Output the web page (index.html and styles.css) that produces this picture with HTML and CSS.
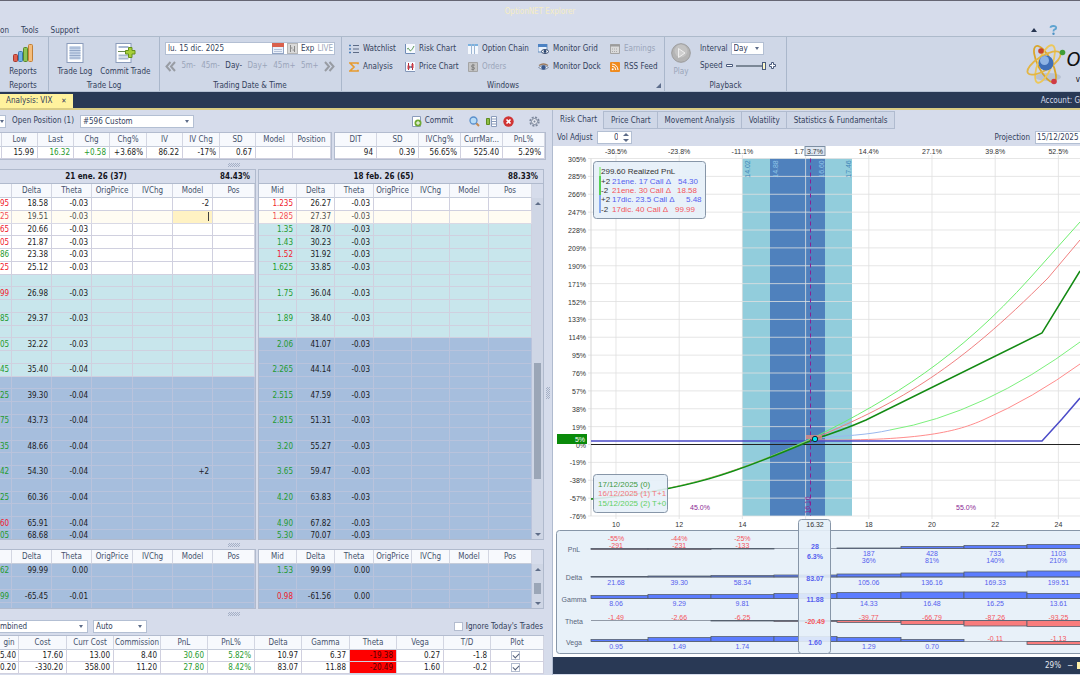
FILE: index.html
```html
<!DOCTYPE html>
<html lang="en">
<head>
<meta charset="UTF-8">
<title>OptionNET Explorer</title>
<link rel="stylesheet" href="styles.css">
</head>
<body>
<header class="titlebar">
    <h1>OptionNET Explorer</h1>
    <nav class="menu">
        <a href="#">on</a>
        <a href="#">Tools</a>
        <a href="#">Support</a>
        <span class="spacer"></span>
        <button class="collapse" aria-label="Collapse ribbon"><svg width="6" height="4"><path d="M0 4L3 0L6 4Z" fill="#26344f"/></svg></button>
        <button class="help" aria-label="Help"><svg width="9" height="10" viewBox="0 0 9 10"><path d="M1.500 2.800Q1.600 1 4.300 1Q7.300 1 7.200 2.900Q7.100 4.300 5.300 4.700Q4.500 5 4.500 6.600" fill="none" stroke="#5ea3d0" stroke-width="1.800"/><circle cx="4.500" cy="8.700" r="1.200" fill="#4f93c4"/></svg></button>
    </nav>
</header>

<div class="ribbon">
    <section class="group group-reports">
        <div class="group-body">
            <button class="big">
                <svg width="20" height="20" viewBox="0 0 20 20">
                    <rect x=".5" y="11.500" width="4" height="7" rx="1" fill="#e0604f" stroke="#a8382c"/>
                    <rect x="5.500" y="8.500" width="4" height="10" rx="1" fill="#6fb1e6" stroke="#3b78ad"/>
                    <rect x="10.500" y="4.500" width="4" height="14" rx="1" fill="#8fc455" stroke="#568727"/>
                    <rect x="15.500" y="1.500" width="4" height="17" rx="1" fill="#f4bd7c" stroke="#c27f35"/>
                </svg>
                Reports
            </button>
        </div>
        <h2>Reports</h2>
    </section>
    <section class="group group-log">
        <div class="group-body">
            <button class="big">
                <svg width="20" height="20" viewBox="0 0 20 20">
                    <rect x="2" y=".5" width="16" height="19" fill="#fff" stroke="#8b9cbb"/>
                    <rect x="4.500" y="3" width="11" height="13.500" fill="#c7d5ea"/>
                    <path d="M4.500 5h11M4.500 7.500h11M4.500 10h11M4.500 12.500h11M4.500 15h11" stroke="#94a8c8"/>
                </svg>
                Trade Log
            </button>
            <button class="big">
                <svg width="22" height="20" viewBox="0 0 22 20">
                    <rect x="2" y=".5" width="15" height="19" fill="#fff" stroke="#8b9cbb"/>
                    <path d="M4.500 4h10M4.500 12.500h10M4.500 15.500h10" stroke="#a9b9d4" stroke-width="2"/>
                    <path d="M4 8.500h8" stroke="#6a8a50"/>
                    <path d="M14.500 4.500h3.500v3h3v3.500h-3v3.500h-3.500v-3.500h-3v-3.500h3z" fill="#a6ce39" stroke="#64901c"/>
                </svg>
                Commit Trade
            </button>
        </div>
        <h2>Trade Log</h2>
    </section>
    <section class="group group-date">
        <div class="group-body stack">
            <div class="datebox">
                <input type="text" value="lu. 15 dic. 2025" aria-label="Trading date">
                <svg width="12" height="11" viewBox="0 0 12 11"><rect x=".5" y=".5" width="11" height="10" fill="#eaf0fa" stroke="#92a4c4"/><path d="M0 0h12v4H0z" fill="#d9604c"/><path d="M2 6.500h8M2 8.500h8" stroke="#b6c3da"/></svg>
                <svg width="11" height="11" viewBox="0 0 11 11"><rect x=".5" y=".5" width="10" height="10" fill="#d9d9d9" stroke="#b5b5b5"/><path d="M3.500 2v7M7.500 3v6M3.500 5h2M5.500 7h2" stroke="#8a8a8a"/></svg>
                <button>Exp</button>
                <button class="off">LIVE</button>
            </div>
            <div class="steps">
                <button aria-label="Back"><svg width="11" height="11" viewBox="0 0 11 11"><path d="M5.500 1L1.500 5.500L5.500 10M10 1L6 5.500L10 10" fill="none" stroke="#989ca3" stroke-width="2"/></svg></button>
                <button class="off">5m-</button>
                <button class="off">45m-</button>
                <button>Day-</button>
                <button class="off">Day+</button>
                <button class="off">45m+</button>
                <button class="off">5m+</button>
                <button aria-label="Forward"><svg width="11" height="11" viewBox="0 0 11 11"><path d="M1 1L5 5.500L1 10M5.500 1L9.500 5.500L5.500 10" fill="none" stroke="#989ca3" stroke-width="2"/></svg></button>
            </div>
        </div>
        <h2>Trading Date &amp; Time</h2>
    </section>
    <section class="group group-windows">
        <div class="group-body tools">
            <button><svg width="10" height="10" viewBox="0 0 10 10"><path d="M0 1.500h2M0 5h2M0 8.500h2" stroke="#4d7fb8" stroke-width="1.500"/><path d="M4 1.500h6M4 5h6M4 8.500h6" stroke="#5d6b85"/></svg>Watchlist</button>
            <button><svg width="10" height="10" viewBox="0 0 10 10"><path d="M0 0h10v10H0z" fill="#f7faff"/><path d="M.5 0v9.500H10" fill="none" stroke="#6f8cb7"/><path d="M2 5Q3.500 3 4.500 6T9 2" fill="none" stroke="#5d9a58"/></svg>Risk Chart</button>
            <button><svg width="10" height="10" viewBox="0 0 10 10"><path d="M0 0h10v10H0z" fill="#f4f8fd"/><path d="M0 1h10" stroke="#7ab1df" stroke-width="2"/><path d="M3.500 0v10M6.500 0v10" stroke="#9db6d3"/></svg>Option Chain</button>
            <button><svg width="11" height="10" viewBox="0 0 11 10"><path d="M0 0h9v8H0z" fill="#eaf2fc" stroke="#668fbf"/><path d="M0 1.500h9" stroke="#4c82c3" stroke-width="3"/><ellipse cx="7" cy="7.500" rx="3.500" ry="2" fill="#fff" stroke="#33486e"/><circle cx="7" cy="7.500" r="1.400" fill="#26406b"/></svg>Monitor Grid</button>
            <button class="off"><svg width="10" height="10" viewBox="0 0 10 10"><path d="M.5 .5h9v9h-9z" fill="#dadada" stroke="#a4a4a4"/><path d="M0 1.500h10" stroke="#9b9b9b" stroke-width="2"/><path d="M2 5h6M2 7.500h6" stroke="#aaa" stroke-dasharray="1 1"/></svg>Earnings</button>
            <button><svg width="10" height="10" viewBox="0 0 10 10"><path d="M9 2.200V1H1l4 4l-4 4h8V7.800" fill="none" stroke="#e79b2e" stroke-width="1.700"/></svg>Analysis</button>
            <button><svg width="10" height="10" viewBox="0 0 10 10"><path d="M0 0h10v10H0z" fill="#f7faff"/><path d="M.5 0v9.500H10" fill="none" stroke="#8296b8"/><path d="M3.500 1v7M7.500 1v7" stroke="#b22b36"/><path d="M2.500 3.500h2v3.500h-2zM6.500 2h2v4h-2z" fill="#cf3b45"/><path d="M4 5h3" stroke="#26406b"/></svg>Price Chart</button>
            <button class="off"><svg width="10" height="10" viewBox="0 0 10 10"><path d="M.5 .5h9v9h-9z" fill="#c4c4c4" stroke="#a4a4a4"/><path d="M6.800 3.200Q3.500 2.300 3.500 4T5 5.200T6.400 7Q5.500 8 3.200 7.200M5 1.800v7" fill="none" stroke="#777" stroke-width=".8"/></svg>Orders</button>
            <button><svg width="11" height="10" viewBox="0 0 11 10"><path d="M1 3.500Q5.500 .5 10 3.500" fill="none" stroke="#9c7a5c" stroke-width="1.400"/><path d="M.5 5.500Q5.500 1.500 10.500 5.500Q5.500 9.500 .5 5.500Z" fill="#eef1f6" stroke="#8391ab"/><circle cx="5.500" cy="5.500" r="2.200" fill="#39588c"/></svg>Monitor Dock</button>
            <button><svg width="10" height="10" viewBox="0 0 10 10"><rect width="10" height="10" rx="1" fill="#ef8b1e"/><circle cx="2.700" cy="7.300" r="1" fill="#fff"/><path d="M2 4.200A3.800 3.800 0 0 1 5.800 8M2 2A6 6 0 0 1 8 8" fill="none" stroke="#fff"/></svg>RSS Feed</button>
        </div>
        <h2>Windows</h2>
        <svg class="launcher" width="5" height="5"><path d="M5 0v5H0z" fill="#5d6d8c"/></svg>
    </section>
    <section class="group group-play">
        <div class="group-body">
            <button class="big off">
                <svg width="20" height="20" viewBox="0 0 20 20"><circle cx="10" cy="10" r="9.300" fill="#b4b4b4" stroke="#9b9b9b"/><circle cx="10" cy="8" r="6.500" fill="#c3c3c3"/><path d="M7.500 5.500v9l6.500-4.500z" fill="#cfcfcf" stroke="#efefef"/></svg>
                Play
            </button>
            <div class="playback">
                <div class="field">
                    <label for="interval">Interval</label>
                    <span class="pick pick-interval"><select id="interval"><option>Day</option></select></span>
                </div>
                <div class="field">
                    <label for="speed">Speed</label>
                    <svg width="7" height="7"><path d="M.5 2.500h6v2h-6z" fill="#fff" stroke="#4a5b7c"/></svg>
                    <input class="slider" type="range" id="speed" min="0" max="10" value="10">
                    <svg width="7" height="7"><path d="M2.500 .5h2v2h2v2h-2v2h-2v-2h-2v-2h2z" fill="#fff" stroke="#4a5b7c"/></svg>
                </div>
            </div>
        </div>
        <h2>Playback</h2>
    </section>
    <div class="brand">
        <svg width="40" height="44" viewBox="0 0 40 44">
            <ellipse cx="22" cy="35" rx="13" ry="4" fill="#b9c2d3"/>
            <g fill="none" stroke="#d9a62c" stroke-width="1.800">
                <ellipse cx="19" cy="22" rx="7" ry="20" transform="rotate(-27 19 22)"/>
                <ellipse cx="19" cy="22" rx="7" ry="20" transform="rotate(22 19 22)" stroke="#ecc75a"/>
                <ellipse cx="18" cy="21" rx="7" ry="19" transform="rotate(58 18 21)" stroke="#e3b645"/>
            </g>
            <circle cx="20" cy="21" r="7.500" fill="#3f6fb8"/>
            <circle cx="18.500" cy="18.500" r="4.500" fill="#8fb4e4"/>
            <circle cx="15" cy="9" r="2.800" fill="#c9442a"/>
            <circle cx="36.500" cy="10.500" r="2.800" fill="#3f9d36"/>
            <circle cx="28" cy="39.500" r="2.800" fill="#cf3b45"/>
        </svg>
        <div class="brand-text"><em>O</em><small>v</small></div>
    </div>
</div>

<div class="doctabs">
    <div class="doctab"><a href="#">Analysis: VIX</a><button aria-label="Close tab">✕</button></div>
    <span class="account">Account: G</span>
</div>

<main>
    <div class="left">
        <div class="toolbar">
            <span class="pick pick-edge"><select aria-label="Symbol"><option></option></select></span>
            <label for="position">Open Position (1)</label>
            <span class="pick pick-position"><select id="position"><option>#596 Custom</option></select></span>
            <span class="spacer"></span>
            <button class="commit"><svg width="10" height="11" viewBox="0 0 10 11"><path d="M.5 .5h8v10h-8z" fill="#fff" stroke="#8b9cbb"/><circle cx="6" cy="7" r="3.500" fill="#6faa35"/><path d="M6 5v4M4 7h4" stroke="#fff"/></svg>Commit</button>
            <button aria-label="Search"><svg width="11" height="11" viewBox="0 0 11 11"><path d="M6.500 6.500L10 10" stroke="#c48a52" stroke-width="2"/><circle cx="4.500" cy="4.500" r="3.500" fill="#b7dbf6" stroke="#5a8fcb" stroke-width="1.300"/></svg></button>
            <button aria-label="Columns"><svg width="11" height="11" viewBox="0 0 11 11"><path d="M5.500 .5h5v10h-5z" fill="#fff" stroke="#8b9cbb"/><path d="M5 3h5M5 5.500h5M5 8h5" stroke="#8b9cbb"/><path d="M.5 2.500h3v6h-3z" fill="#8fbd44" stroke="#5e8d20"/></svg></button>
            <button aria-label="Discard"><svg width="11" height="11" viewBox="0 0 11 11"><circle cx="5.500" cy="5.500" r="5.200" fill="#d03434"/><path d="M3.500 3.500l4 4M7.500 3.500l-4 4" stroke="#fff" stroke-width="1.700"/></svg></button>
            <button class="gear" aria-label="Settings"><svg width="11" height="11" viewBox="0 0 11 11"><circle cx="5.500" cy="5.500" r="4.300" fill="none" stroke="#7d889c" stroke-width="1.700" stroke-dasharray="2 1.380"/><circle cx="5.500" cy="5.500" r="3" fill="#e6e9f0" stroke="#7d889c"/><circle cx="5.500" cy="5.500" r="1" fill="#7d889c"/></svg></button>
        </div>

        <div class="quotes">
            <table class="grid" id="quote"></table>
            <table class="grid" id="trade"></table>
        </div>
        <div class="grip"></div>

        <div class="chains">
            <section class="chain">
                <h3><span>21 ene. 26 (37)</span><b>84.43%</b></h3>
                <div class="chain-body"><table class="grid tall" id="chainA"></table></div>
            </section>
            <section class="chain">
                <h3><span>18 feb. 26 (65)</span><b>88.33%</b></h3>
                <div class="chain-body"><table class="grid tall" id="chainB"></table><div class="scroll"><i class="thumb"></i></div></div>
            </section>
        </div>
        <div class="grip"></div>

        <div class="chains short">
            <section class="chain"><div class="chain-body"><table class="grid" id="putsA"></table></div></section>
            <section class="chain"><div class="chain-body"><table class="grid" id="putsB"></table><div class="scroll"><i class="thumb"></i></div></div></section>
        </div>
        <div class="grip"></div>

        <div class="filters">
            <span class="pick pick-view"><select aria-label="View"><option>mbined</option></select></span>
            <span class="pick pick-auto"><select aria-label="Mode"><option>Auto</option></select></span>
            <span class="spacer"></span>
            <input type="checkbox" id="ignore"><label for="ignore">Ignore Today's Trades</label>
        </div>
        <table class="grid" id="summary"></table>
    </div>

    <div class="splitter"></div>

    <div class="right">
        <nav class="tabs">
            <a href="#" class="active">Risk Chart</a>
            <a href="#">Price Chart</a>
            <a href="#">Movement Analysis</a>
            <a href="#">Volatility</a>
            <a href="#">Statistics &amp; Fundamentals</a>
        </nav>
        <div class="controls">
            <label for="vol">Vol Adjust</label>
            <span class="spin"><input type="text" id="vol" value="0"></span>
            <span class="spacer"></span>
            <label for="projection">Projection</label>
            <input class="projection" type="text" id="projection" value="15/12/2025">
        </div>
        <div class="chart"><svg id="risk" viewBox="0 0 527 511" role="img" aria-label="Risk chart"></svg></div>
        <footer class="status"><span>29%</span><span>−</span><i></i></footer>
    </div>
</main>

<script src="script.js"></script>
</body>
</html>
```
FILE: styles.css
```css
* {
    box-sizing: border-box;
}
body {
    margin: 0;
    height: 100vh;
    overflow: hidden;
    display: flex;
    flex-direction: column;
    background: #d6dceb;
    color: #33415c;
    font: 8px/12px "DejaVu Sans Condensed", "DejaVu Sans", sans-serif;
}
h1, h2, h3 {
    margin: 0;
    font: inherit;
}
button, input, select {
    font: inherit;
    color: inherit;
    margin: 0;
    padding: 0;
    border: 0;
    background: none;
    border-radius: 0;
}
a {
    color: inherit;
    text-decoration: none;
}
svg {
    display: block;
    flex: none;
}
.spacer {
    flex: 1;
}
.off {
    color: #9aa5ba;
}

/* title and menu */
.titlebar {
    flex: none;
    border-top: 1px solid #666673;
    border-bottom: 1px solid #adbacb;
}
.titlebar h1 {
    text-align: center;
    color: #f5ecc4;
    padding: 5px 0 6px;
}
.menu {
    display: flex;
    align-items: flex-end;
    gap: 12px;
    height: 12px;
    line-height: 10px;
    padding-right: 22px;
}
.menu button {
    align-self: center;
}

/* ribbon */
.ribbon {
    flex: none;
    display: flex;
    height: 55px;
    background: #cfd7e7;
    border-bottom: 1px solid #b4c0d3;
}
.group {
    position: relative;
    display: flex;
    flex-direction: column;
    justify-content: space-between;
    border-right: 1px solid #aab7cb;
    padding-top: 5px;
}
.group h2 {
    line-height: 11px;
    text-align: center;
}
.group-body {
    display: flex;
    justify-content: center;
    gap: 8px;
}
.group-reports {
    width: 49px;
    padding-right: 2px;
}
.group-log {
    width: 111px;
}
.group-date {
    width: 182px;
    padding: 5px 6px 0 5px;
}
.group-windows {
    width: 323px;
}
.group-play {
    width: 122px;
}
.big {
    display: flex;
    flex-direction: column;
    align-items: center;
    gap: 3px;
    padding-top: 1px;
    white-space: nowrap;
}
.group-body.stack {
    flex-direction: column;
    gap: 5px;
}
.datebox {
    display: flex;
    align-items: center;
    gap: 3px;
    height: 13px;
    padding: 0 1px 0 2px;
    background: #fff;
    border: 1px solid #b3bfd3;
}
.datebox input {
    flex: 1;
    min-width: 0;
}
.steps {
    display: flex;
    justify-content: space-between;
    align-items: center;
}
.group-body.tools {
    display: grid;
    grid-template-columns: 56px 63px 70px 72px 1fr;
    gap: 4px 0;
    padding-left: 7px;
}
.tools button {
    display: flex;
    align-items: center;
    gap: 4px;
    height: 14px;
    white-space: nowrap;
}
.launcher {
    position: absolute;
    right: 3px;
    bottom: 3px;
}
.playback {
    flex: 1;
    display: flex;
    flex-direction: column;
    gap: 4px;
}
.group-play .group-body {
    justify-content: flex-start;
    padding-left: 6px;
    gap: 9px;
}
.field {
    display: flex;
    align-items: center;
    gap: 3px;
    height: 13px;
}
.slider {
    appearance: none;
    width: 30px;
    height: 10px;
    background: linear-gradient(#7b8796, #7b8796) center / 100% 2px no-repeat;
}
.slider::-webkit-slider-thumb {
    appearance: none;
    width: 4px;
    height: 8px;
    background: #fdf6c8;
    border: 1px solid #4a5b7c;
}
.brand {
    flex: 1;
    display: flex;
    justify-content: flex-end;
    align-items: flex-start;
    padding-top: 5px;
    overflow: hidden;
}
.brand-text {
    width: 14px;
    overflow: hidden;
    color: #111;
}
.brand-text em {
    display: block;
    font: italic 20px/34px "Noto Sans", sans-serif;
}
.brand-text small {
    display: block;
    text-align: right;
    font-size: 8px;
    line-height: 8px;
}

/* select boxes */
.pick {
    position: relative;
    display: block;
    height: 13px;
    background: #fff;
    border: 1px solid #b3bfd3;
}
.pick::after {
    content: "";
    position: absolute;
    right: 4px;
    top: 4px;
    border: 2px solid transparent;
    border-top: 3px solid #5c6b88;
    border-bottom: 0;
}
.pick select {
    appearance: none;
    display: block;
    width: 100%;
    height: 11px;
    line-height: 11px;
    padding-left: 2px;
}
.pick-interval {
    width: 33px;
}
.pick-edge {
    width: 6px;
    border-left: 0;
}
.pick-edge::after {
    right: 1px;
}
.pick-position {
    width: 114px;
}
.pick-view {
    width: 88px;
    border-left: 0;
}
.pick-view select {
    padding-left: 0;
}
.pick-auto {
    width: 54px;
}

/* document tabs */
.doctabs {
    flex: none;
    display: flex;
    justify-content: space-between;
    align-items: flex-end;
    height: 18px;
    padding-top: 2px;
    background: #293955;
    border-bottom: 2px solid #d9cc84;
}
.doctab {
    display: flex;
    gap: 9px;
    height: 14px;
    line-height: 14px;
    padding: 0 6px;
    background: #fff29d;
}
.doctab button {
    font-size: 7px;
}
.account {
    line-height: 15px;
    color: #d6dceb;
}

/* panes */
main {
    flex: 1;
    min-height: 0;
    display: grid;
    grid-template-columns: 544fr 9px 527fr;
}
.left, .right {
    display: flex;
    flex-direction: column;
    min-width: 0;
    min-height: 0;
}
.splitter {
    display: flex;
    align-items: center;
    justify-content: center;
    border-right: 1px solid #b0bbcf;
}
.splitter::before {
    content: "";
    width: 4px;
    height: 12px;
    background: repeating-conic-gradient(#a5b0c6 0 25%, transparent 0 50%) 0 0 / 2px 2px;
}
.toolbar {
    flex: none;
    display: flex;
    align-items: center;
    gap: 6px;
    height: 22px;
    padding-right: 4px;
}
.toolbar button {
    display: flex;
    align-items: center;
    gap: 3px;
}
.toolbar .commit {
    margin-right: 10px;
}
.toolbar .gear {
    margin-left: 9px;
}

/* data grids */
.grid {
    width: 100%;
    table-layout: fixed;
    border-collapse: separate;
    border-spacing: 0;
    background: #fff;
    color: #1c1c24;
}
.grid th {
    height: 14px;
    padding: 0;
    font-weight: normal;
    color: #45526c;
    background: #f7f9fd;
    border-right: 1px solid #d3d6e2;
    border-bottom: 1px solid #c5ccda;
    white-space: nowrap;
}
.grid td {
    padding: 0 3px 0 0;
    line-height: 11px;
    text-align: right;
    white-space: nowrap;
    border-right: 1px solid #d0d0df;
    border-bottom: 1px solid #d0d0df;
}
.grid .up {
    color: #1f9a2e;
}
.grid .down {
    color: #f0202c;
}
.grid .alert {
    background: #f00;
    color: #500;
}
.grid .cyan td {
    background: #c8e6ec;
}
.grid .blue td {
    background: #a6bedd;
    border-color: #b9c3dc;
}
.grid .hot td {
    background: #fffcf0;
    opacity: .8;
}
.grid .hot .edit {
    background: #ffefb5;
}
.edit i {
    display: block;
    height: 9px;
    border-right: 1px solid #111;
}
.quotes {
    flex: none;
    display: grid;
    grid-template-columns: 330fr 211fr;
    gap: 2px;
    padding-right: 1px;
}
.quotes .grid {
    border: 1px solid #b3bccf;
}
#quote {
    border-left: 0;
}
.grip {
    flex: none;
    height: 9px;
    padding-top: 3px;
}
.grip::before {
    content: "";
    display: block;
    width: 12px;
    height: 4px;
    margin-left: 42%;
    background: repeating-conic-gradient(#a5b0c6 0 25%, transparent 0 50%) 0 0 / 2px 2px;
}
.chains {
    flex: 1;
    min-height: 0;
    display: grid;
    grid-template-columns: 256fr 286fr;
    gap: 2px;
}
.short {
    flex: 0 0 60px;
}
.chain {
    display: flex;
    flex-direction: column;
    min-height: 0;
    border: 1px solid #b0bacd;
    overflow: hidden;
}
.chain:first-child {
    border-left: 0;
}
.chain h3 {
    flex: none;
    display: flex;
    align-items: center;
    height: 14px;
    padding-right: 5px;
    border-bottom: 1px solid #b0bacd;
    font-weight: bold;
    color: #14141c;
}
.chain h3 span {
    flex: 1;
    text-align: center;
}
.chain:first-child h3 {
    margin-left: -28px;
}
.chain-body {
    flex: 1;
    display: flex;
    align-items: flex-start;
    min-height: 0;
}
.chain-body .grid {
    flex: 1;
    min-width: 0;
}
.tall {
    height: 359px;
}
.tall td {
    height: 12px;
}
.short td {
    height: 13px;
}
.scroll {
    flex: none;
    align-self: stretch;
    width: 11px;
    margin-top: 14px;
    display: flex;
    flex-direction: column;
    align-items: center;
    background: #cfd6e5;
}
.scroll::before, .scroll::after {
    content: "";
    border: 3px solid transparent;
}
.scroll::before {
    border-bottom-color: #5f6d88;
    border-top: 0;
    margin-top: 4px;
}
.scroll::after {
    border-top-color: #5f6d88;
    border-bottom: 0;
    margin: auto 0 3px;
}
.thumb {
    width: 7px;
    height: 34%;
    margin-top: 158px;
    background: #9ba6b7;
}
.short .thumb {
    height: 11px;
    margin-top: 12px;
}
.filters {
    flex: none;
    display: flex;
    align-items: center;
    gap: 5px;
    height: 17px;
    padding-right: 1px;
}
input[type=checkbox] {
    appearance: none;
    width: 9px;
    height: 9px;
    background: #fff;
    border: 1px solid #b3bccf;
}
.filters input {
    margin-right: -2px;
}
.grid input {
    display: block;
    margin: 0 auto;
}
.grid input:checked::before {
    content: "";
    display: block;
    width: 5px;
    height: 3px;
    margin: 1px;
    border-left: 1px solid #55617a;
    border-bottom: 1px solid #55617a;
    transform: rotate(-45deg);
}
#summary {
    flex: none;
    border-top: 1px solid #b3bccf;
    margin-bottom: 1px;
}

/* chart side */
.right {
    background: #d6dceb;
    overflow: hidden;
}
.tabs {
    flex: none;
    display: flex;
    height: 19px;
    padding-top: 1px;
}
.tabs a {
    padding: 0 6px 0 7px;
    line-height: 17px;
    background: #cfd7e7;
    border: 1px solid #b0bbcf;
    border-left: 0;
    white-space: nowrap;
}
.tabs .active {
    background: none;
    border-bottom: 0;
    border-top: 0;
}
.controls {
    flex: none;
    display: flex;
    align-items: center;
    gap: 5px;
    height: 17px;
    padding-left: 4px;
}
.spin, .projection {
    height: 13px;
    background: #fff;
    border: 1px solid #b3bfd3;
}
.spin {
    position: relative;
    width: 35px;
    padding-right: 13px;
}
.spin input {
    display: block;
    width: 100%;
    height: 11px;
    text-align: right;
}
.spin::before, .spin::after {
    content: "";
    position: absolute;
    right: 2px;
    border: 3px solid transparent;
}
.spin::before {
    top: 1px;
    border-top: 0;
    border-bottom-color: #5c6b88;
}
.spin::after {
    bottom: 1px;
    border-bottom: 0;
    border-top-color: #5c6b88;
}
.projection {
    width: 45px;
    padding-left: 1px;
    border-right: 0;
}
.chart {
    flex: 1;
    min-height: 0;
    background: #fff;
    overflow: hidden;
}
.chart svg {
    width: 100%;
}
.chart text {
    font: 7px "Liberation Sans", Arial, sans-serif;
    fill: #333;
    text-anchor: middle;
}
.chart .axis {
    text-anchor: end;
}
.chart .legend {
    font-size: 8px;
    text-anchor: start;
}
.chart .label {
    fill: #59667c;
}
.chart .pos {
    fill: #5560ee;
}
.chart .neg {
    fill: #f4555d;
}
.chart .prob {
    fill: #8a1f93;
}
.chart .strong {
    font-weight: bold;
}
.chart .tag {
    fill: #fff;
}
.chart .t0 {
    fill: #62d062;
}
.chart .t1 {
    fill: #f27a7a;
}
.chart .expiry {
    fill: #3f9a3f;
}
.chart .outer {
    fill: #3f86b8;
}
.chart .inner {
    fill: #8fc7ea;
}
.chart .panel {
    fill: #e6eff8;
    fill-opacity: .9;
    stroke: #8796a8;
}
.status {
    flex: none;
    display: flex;
    align-items: center;
    justify-content: flex-end;
    gap: 6px;
    height: 17px;
    margin-bottom: 1px;
    background: #293955;
    color: #e3e7f0;
}
.status i {
    width: 3px;
    height: 7px;
    margin-left: -2px;
    background: #fff1ab;
}
```
FILE: script.js
```js
// ---- tables ----
// a leading "g" or "r" colours the value, "!" marks an alert cell
function cell(v) {
    if (v === "[x]") return '<td><input type="checkbox" checked aria-label="Plot"></td>';
    if (v === "|") return '<td class="edit"><i></i></td>';
    const cls = { g: "up", r: "down", "!": "alert" }[v[0]];
    return cls ? `<td class="${cls}">${v.slice(1)}</td>` : `<td>${v || "&nbsp;"}</td>`;
}

function fill(id, widths, heads, rows, rowClass) {
    const cols = widths.map(w => `<col style="width:${w}px">`).join("");
    const head = heads.map(h => `<th>${h}</th>`).join("");
    const body = rows.map((r, i) => {
        const cells = heads.map((h, n) => cell(r[n] || "")).join("");
        return `<tr class="${rowClass ? rowClass(i) : ""}">${cells}</tr>`;
    }).join("");
    document.getElementById(id).innerHTML =
        `<colgroup>${cols}</colgroup><thead><tr>${head}</tr></thead><tbody>${body}</tbody>`;
}

fill("quote", [2, 36, 36, 36, 37, 36, 37, 36, 37, 38],
    ["", "Low", "Last", "Chg", "Chg%", "IV", "IV Chg", "SD", "Model", "Position"],
    [["", "15.99", "g16.32", "g+0.58", "+3.68%", "86.22", "-17%", "0.67"]]);
fill("trade", [42, 42, 42, 42, 42],
    ["DIT", "SD", "IVChg%", "CurrMar...", "PnL%"],
    [["94", "0.39", "56.65%", "525.40", "5.29%"]]);

const heads = ["Delta", "Theta", "OrigPrice", "IVChg", "Model", "Pos"];
const widthsA = [12, 40, 40, 41, 40, 40, 42];
const widthsB = [38, 38, 39, 38, 38, 39, 43];

const callsA = [
    ["r95", "18.58", "-0.03", "", "", "-2"],
    ["r25", "19.51", "-0.03", "", "", "|"],
    ["r65", "20.66", "-0.03"],
    ["r05", "21.87", "-0.03"],
    ["g86", "23.38", "-0.03"],
    ["r25", "25.12", "-0.03"],
    [], ["r99", "26.98", "-0.03"],
    [], ["g85", "29.37", "-0.03"],
    [], ["g05", "32.22", "-0.03"],
    [], ["g45", "35.40", "-0.04"],
    [], ["g25", "39.30", "-0.04"],
    [], ["g75", "43.73", "-0.04"],
    [], ["g35", "48.66", "-0.04"],
    [], ["g42", "54.30", "-0.04", "", "", "+2"],
    [], ["g25", "60.36", "-0.04"],
    [], ["r60", "65.91", "-0.04"],
    ["g05", "68.68", "-0.04"]
];
const callsB = [
    ["r1.235", "26.27", "-0.03"],
    ["r1.285", "27.37", "-0.03"],
    ["g1.35", "28.70", "-0.03"],
    ["g1.43", "30.23", "-0.03"],
    ["r1.52", "31.92", "-0.03"],
    ["g1.625", "33.85", "-0.03"],
    [], ["g1.75", "36.04", "-0.03"],
    [], ["g1.89", "38.40", "-0.03"],
    [], ["g2.06", "41.07", "-0.03"],
    [], ["g2.265", "44.14", "-0.03"],
    [], ["g2.515", "47.59", "-0.03"],
    [], ["g2.815", "51.31", "-0.03"],
    [], ["g3.20", "55.27", "-0.03"],
    [], ["g3.65", "59.47", "-0.03"],
    [], ["g4.20", "63.83", "-0.03"],
    [], ["g4.90", "67.82", "-0.03"],
    ["g5.30", "70.07", "-0.03"]
];
// rows outside one / two standard deviations get their own band
const band = (cyan, blue) => i => i === 1 ? "hot" : i >= blue ? "blue" : i >= cyan ? "cyan" : "";

fill("chainA", widthsA, ["", ...heads], callsA, band(6, 14));
fill("chainB", widthsB, ["Mid", ...heads], callsB, band(2, 11));
fill("putsA", widthsA, ["", ...heads], [["g62", "99.99", "0.00"], [], ["g99", "-65.45", "-0.01"], []], () => "blue");
fill("putsB", widthsB, ["Mid", ...heads], [["g1.53", "99.99", "0.00"], [], ["r0.98", "-61.56", "0.00"], []], () => "blue");

fill("summary", [19, 48, 47, 47, 47, 47, 47, 48, 47, 47, 47, 53],
    ["gin", "Cost", "Curr Cost", "Commission", "PnL", "PnL%", "Delta", "Gamma", "Theta", "Vega", "T/D", "Plot"],
    [
        ["5.40", "17.60", "13.00", "8.40", "g30.60", "g5.82%", "10.97", "6.37", "!-19.38", "0.27", "-1.8", "[x]"],
        ["0.20", "-330.20", "358.00", "11.20", "g27.80", "g8.42%", "83.07", "11.88", "!-20.49", "1.60", "-0.2", "[x]"]
    ]);

// ---- risk chart ----
const X = price => 63 + (price - 10) * 31.6;
const left = 38, right = 527, top_ = 12.5, bottom = 370;
let out = "";

const text = (x, y, s, cls = "", extra = "") => out += `<text x="${x}" y="${y}" class="${cls}" ${extra}>${s}</text>`;
const rect = (x, y, w, h, fill, extra = "") => out += `<rect x="${x}" y="${y}" width="${w}" height="${h}" fill="${fill}" ${extra}/>`;
const path = (d, color, width = 1, extra = "") => out += `<path d="${d}" fill="none" stroke="${color}" stroke-width="${width}" ${extra}/>`;
const box = (x, y, w, h) => out += `<rect x="${x}" y="${y}" width="${w}" height="${h}" rx="3" class="panel"/>`;

// deviation bands
rect(189, top_, 110, bottom - top_, "#92cddc");
rect(217, top_, 55, bottom - top_, "#4f81bd");

// grid
["305", "285", "266", "247", "228", "209", "190", "171", "152", "133", "114", "95", "76", "57", "38", "19", "0", "-19", "-38", "-57", "-76"].forEach((s, i) => {
    const y = top_ + i * 17.875;
    path(`M${left - 3} ${y}H${right}`, "#e0e0e0", 1, 'stroke-opacity=".8"');
    text(33, y + 3, s + "%", "axis");
});
["-36.5%", "-23.8%", "-11.1%", "", "14.4%", "27.1%", "39.8%", "52.5%"].forEach((s, i) => {
    const x = X(10 + i * 2);
    path(`M${x} 9V${bottom + 3}`, "#e0e0e0", 1, 'stroke-opacity=".8"');
    if (!s) return; // taken by the current price
    text(x, 8, s);
    text(x, 381, 10 + i * 2);
});
text(251, 8, "1.7", "axis");
path(`M${left} ${top_}V${bottom}`, "#d5d5d5");

// band prices
[["14.02", 197, "outer"], ["14.88", 225, "inner"], ["16.60", 271, "inner"], ["17.46", 298, "outer"]].forEach(([s, x, cls]) =>
    text(0, 0, s, cls, `transform="translate(${x} 23) rotate(-90)"`));

// curves
path(`M${left} 298.500H${right}`, "#222");
path("M262 292C290 290 315 289 337 284", "#9ab8ee");
path("M337 284Q430 268 527 196", "#7cf07c");
path("M262 294C370 295 405 285 430 274Q480 252 527 218", "#ff8c8c");
path(`M${left} 295H489L509 273L527 252`, "#4b4bc8", 1.5);
path("M38 353C150 344 210 313 262 292C350 255 405 222 495 132L527 94", "#f08080");
path("M38 353C150 344 210 314 262 291C340 252 405 212 477 132L527 76", "#6fee6f");
path("M38 353C150 344 200 318 262 293Q290 284 313 274L489 187L527 125", "#138a13", 1.5);
path(`M257.500 ${top_}V${bottom}`, "#8a1f93", 1, 'stroke-dasharray="4 3"');
rect(253, 289, 16, 4, "#d98a80", 'opacity=".8"');
out += '<circle cx="262" cy="293" r="2.700" fill="#00e5f0" stroke="#123"/>';
text(0, 0, "16.16", "prob", `transform="translate(257 359) rotate(-90)"`);
text(147, 364, "45.0%", "prob");
text(413, 364, "55.0%", "prob");

// current values on the axes
rect(252, .5, 20, 9, "#dfe7f2", 'stroke="#7d8fa3"');
text(262, 8, "3.7%");
rect(4, 288, 30, 10, "#0a8a0a");
text(32, 296, "5%", "axis tag");

// legends
box(40.5, 15.5, 112, 57);
rect(46, 21, 2, 9, "#a7efa7");
rect(46, 30, 2, 19, "#55d155");
rect(46, 49, 2, 18, "#86aaf0");
text(48, 28, "299.60 Realized PnL", "legend");
[
    ["+2", "pos", "21ene. 17 Call Δ", "54.30", 125],
    ["-2", "neg", "21ene. 30 Call Δ", "18.58", 124],
    ["+2", "pos", "17dic. 23.5 Call Δ", "5.48", 133],
    ["-2", "neg", "17dic. 40 Call Δ", "99.99", 122]
].forEach(([qty, cls, name, delta, x], i) => {
    const y = 37.5 + i * 9.4;
    text(48, y, qty, "legend");
    text(59, y, name, cls + " legend");
    text(x, y, delta, cls + " legend");
});
box(40.5, 328.5, 74, 38);
text(45, 341, "17/12/2025 (0)", "legend expiry");
text(45, 350, "16/12/2025 (1) T+1", "legend t1");
text(45, 360, "15/12/2025 (2) T+0", "legend t0");

// greeks strip: bar height (up is positive) and value for every two points
box(3.5, 384.5, 540, 123);
const edges = [38, 95, 158, 221, 284, 348, 411, 474, 540];
const greeks = [
    { name: "PnL", base: 402.5, bars: [-1, -1, -.5, 0, .5, 2, 3, 4] },
    { name: "Delta", base: 431, bars: [.5, 1, 1.5, 2, 3, 4, 5, 6], values: ["21.68", "39.30", "58.34", "", "105.06", "136.16", "169.33", "199.51"] },
    { name: "Gamma", base: 452.5, bars: [3, 4, 4, 5, 6, 6.5, 6.5, 5], values: ["8.06", "9.29", "9.81", "", "14.33", "16.48", "16.25", "13.61"] },
    { name: "Theta", base: 474.5, bars: [0, 0, -.5, -1, -2, -4, -5.5, -6], values: ["-1.49", "-2.66", "-6.25", "", "-39.77", "-66.79", "-87.26", "-93.25"] },
    { name: "Vega", base: 495.5, bars: [2, 4, 5, 5, 4, 2, 0, -3], values: ["0.95", "1.49", "1.74", "", "1.29", "0.70", "-0.11", "-1.13"] }
];
greeks.forEach(g => {
    text(21, g.base + 3, g.name, "label");
    g.bars.forEach((h, i) => {
        if (h) rect(edges[i], h > 0 ? g.base - h : g.base, edges[i + 1] - edges[i], Math.abs(h), h > 0 ? "#5b7cff" : "#f87c7c", 'stroke="#56606e" stroke-width=".8"');
        const v = g.values && g.values[i];
        if (v) text(X(10 + i * 2), v[0] === "-" ? g.base - 1 : g.base + 7.5, v, v[0] === "-" ? "neg" : "pos");
    });
    path(`M${left} ${g.base}H${right}`, "#56606e", .6);
});
[["-55%", "-291"], ["-44%", "-231"], ["-25%", "-133"]].forEach(([a, b], i) => {
    text(X(10 + i * 2), 395, a, "neg");
    text(X(10 + i * 2), 402, b, "neg");
});
[["187", "36%"], ["428", "81%"], ["733", "140%"], ["1103", "210%"]].forEach(([a, b], i) => {
    text(X(18 + i * 2), 410, a, "pos");
    text(X(18 + i * 2), 417, b, "pos");
});

// selected price
box(245.5, 373.5, 32, 134);
text(262, 381, "16.32");
[["28", 403], ["6.3%", 413], ["83.07", 434.5], ["11.88", 456], ["1.60", 499]].forEach(([s, y]) =>
    text(262, y, s, "pos strong"));
text(262, 477.5, "-20.49", "neg strong");

document.getElementById("risk").innerHTML = out;
```
